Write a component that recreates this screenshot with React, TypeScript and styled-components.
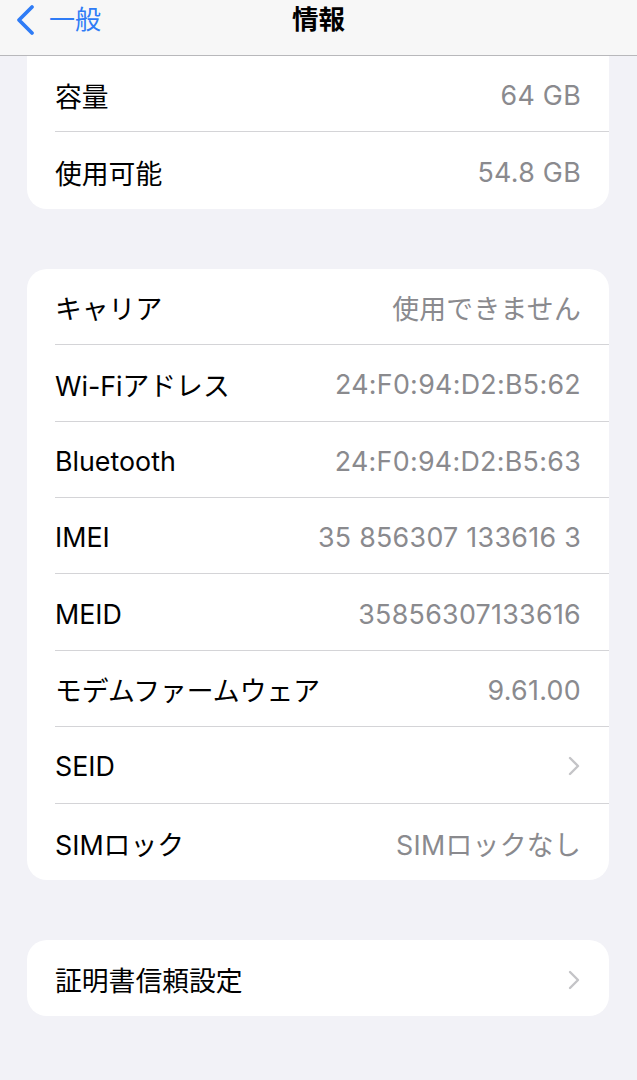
import React from 'react'
import styled, { createGlobalStyle } from 'styled-components'

const GlobalStyle = createGlobalStyle`
  html, body {
    margin: 0;
    padding: 0;
    background: #f2f2f7;
  }
  body {
    font-family: Inter, "Noto Sans CJK JP", sans-serif;
    -webkit-font-smoothing: antialiased;
  }
`

const Page = styled.div`
  width: 637px;
  min-height: 1080px;
  background: #f2f2f7;
  display: flex;
  flex-direction: column;
`

const NavBar = styled.div`
  height: 56px;
  box-sizing: border-box;
  background: #f7f7f7;
  border-bottom: 1px solid #b8b8bb;
  display: grid;
  grid-template-columns: 1fr auto 1fr;
  align-items: start;
  padding-top: 3px;
`

const BackButton = styled.div`
  display: flex;
  align-items: center;
  gap: 12px;
  padding-left: 13px;
  color: #2f7cf6;
  font-size: 26px;
  line-height: 32px;
`

const Title = styled.div`
  font-size: 26.5px;
  font-weight: 700;
  line-height: 32px;
  color: #000;
`

const Content = styled.div`
  display: flex;
  flex-direction: column;
  gap: 60px;
  padding: 0 28px 0 27px;
`

const Card = styled.div<{ $flushTop?: boolean }>`
  background: #fff;
  border-radius: ${p => (p.$flushTop ? '0 0 20px 20px' : '20px')};
  overflow: hidden;
`

const Row = styled.div<{ $last?: boolean }>`
  height: 76.4px;
  margin-left: 28px;
  padding: 3px 28px 0 0;
  display: flex;
  align-items: center;
  justify-content: space-between;
  box-sizing: border-box;
  border-bottom: ${p => (p.$last ? 'none' : '1px solid #d4d4d7')};
`

const Label = styled.span`
  font-size: 26.8px;
  color: #000;
`

const Value = styled.span`
  font-size: 26.8px;
  color: #8a8a8e;
  letter-spacing: 0.3px;
`

const Chevron = () => (
  <svg width="14" height="22" viewBox="0 0 14 22">
    <path d="M3 3 L11 11 L3 19" fill="none" stroke="#c4c4c7" strokeWidth="2.4" strokeLinecap="round" strokeLinejoin="round" />
  </svg>
)

type Item = { label: string; value?: string; chevron?: boolean }

const storage: Item[] = [
  { label: '容量', value: '64 GB' },
  { label: '使用可能', value: '54.8 GB' },
]

const network: Item[] = [
  { label: 'キャリア', value: '使用できません' },
  { label: 'Wi-Fiアドレス', value: '24:F0:94:D2:B5:62' },
  { label: 'Bluetooth', value: '24:F0:94:D2:B5:63' },
  { label: 'IMEI', value: '35 856307 133616 3' },
  { label: 'MEID', value: '35856307133616' },
  { label: 'モデムファームウェア', value: '9.61.00' },
  { label: 'SEID', chevron: true },
  { label: 'SIMロック', value: 'SIMロックなし' },
]

const certs: Item[] = [{ label: '証明書信頼設定', chevron: true }]

function Rows({ items }: { items: Item[] }) {
  return (
    <>
      {items.map((item, i) => (
        <Row key={item.label} $last={i === items.length - 1}>
          <Label>{item.label}</Label>
          {item.chevron ? <Chevron /> : <Value>{item.value}</Value>}
        </Row>
      ))}
    </>
  )
}

export default function App() {
  return (
    <Page>
      <GlobalStyle />
      <NavBar>
        <BackButton>
          <svg width="24" height="34" viewBox="0 0 24 34">
            <path d="M19 4 L6 17 L19 30" fill="none" stroke="#2f7cf6" strokeWidth="3.8" strokeLinecap="round" strokeLinejoin="round" />
          </svg>
          <span>一般</span>
        </BackButton>
        <Title>情報</Title>
        <div />
      </NavBar>
      <Content>
        <Card $flushTop>
          <Rows items={storage} />
        </Card>
        <Card>
          <Rows items={network} />
        </Card>
        <Card>
          <Rows items={certs} />
        </Card>
      </Content>
    </Page>
  )
}
